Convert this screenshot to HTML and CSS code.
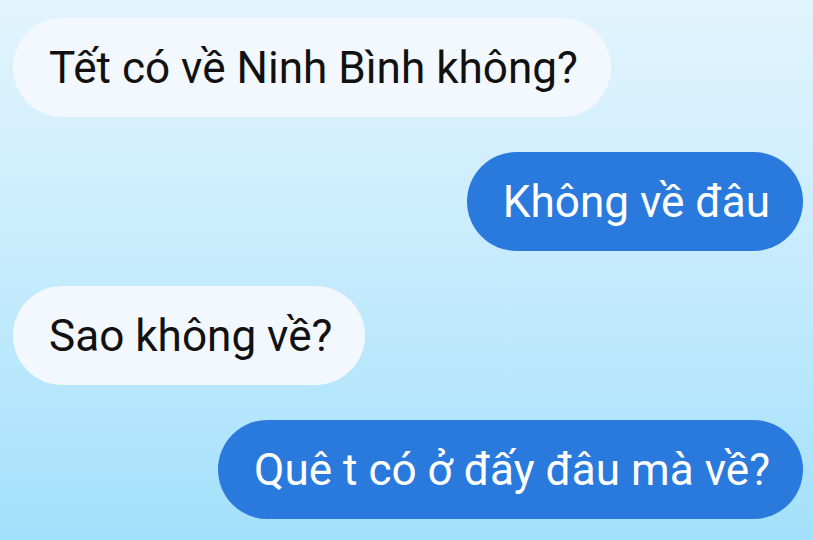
FILE: index.html
```html
<!DOCTYPE html>
<html lang="vi">
<head>
<meta charset="utf-8">
<title>Chat</title>
<link rel="stylesheet" href="styles.css">
</head>
<body>
<main class="chat">
  <div class="msg msg-in">Tết có về Ninh Bình không?</div>
  <div class="msg msg-out">Không về đâu</div>
  <div class="msg msg-in">Sao không về?</div>
  <div class="msg msg-out">Quê t có ở đấy đâu mà về?</div>
</main>
</body>
</html>
```
FILE: styles.css
```css
html, body {
  margin: 0;
  padding: 0;
  width: 813px;
  height: 540px;
  overflow: hidden;
}
body {
  background: linear-gradient(180deg, #e2f4fd 0%, #d2effd 30%, #bfe9fc 60%, #a3e0fb 100%);
  font-family: Roboto, "Noto Sans", "Liberation Sans", sans-serif;
}
.chat {
  display: flex;
  flex-direction: column;
  gap: 35px;
  padding: 18px 10px 0 13px;
}
.msg {
  height: 99px;
  display: flex;
  align-items: center;
  padding: 2px 33px 0 36px;
  border-radius: 50px;
  font-size: 44.1px;
  line-height: 1;
  box-sizing: border-box;
  white-space: nowrap;
}
.msg-in {
  align-self: flex-start;
  background: #f2f8fd;
  color: #111;
}
.msg-out {
  align-self: flex-end;
  background: #2a7ade;
  color: #fff;
}
```
